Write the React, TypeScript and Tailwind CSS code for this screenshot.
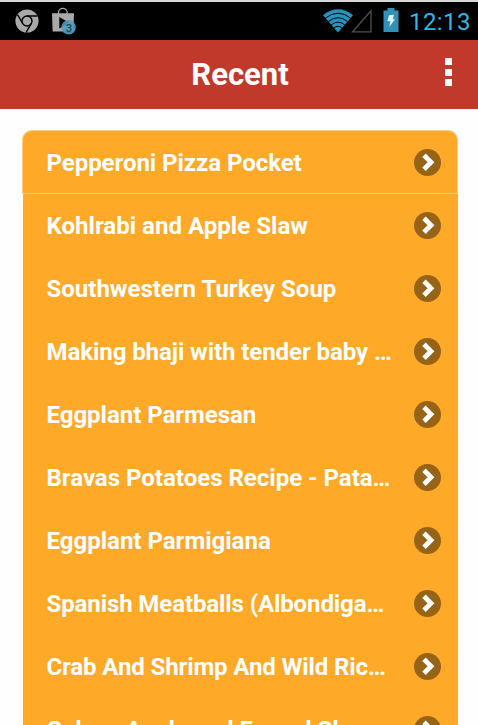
import React from "react";

const recipes = [
  { name: "Pepperoni Pizza Pocket", spacing: "tracking-[-0.04px]" },
  { name: "Kohlrabi and Apple Slaw", spacing: "tracking-[0.03px]" },
  { name: "Southwestern Turkey Soup", spacing: "tracking-normal" },
  { name: "Making bhaji with tender baby …", spacing: "tracking-[-0.07px]" },
  { name: "Eggplant Parmesan", spacing: "tracking-[-0.03px]" },
  { name: "Bravas Potatoes Recipe - Pata…", spacing: "tracking-normal" },
  { name: "Eggplant Parmigiana", spacing: "tracking-normal" },
  { name: "Spanish Meatballs (Albondiga…", spacing: "tracking-[-0.1px]" },
  { name: "Crab And Shrimp And Wild Ric…", spacing: "tracking-[-0.12px]" },
  { name: "Celery, Apple and Fennel Sla…", spacing: "tracking-normal" },
];

function ChromeIcon() {
  return (
    <svg width="24" height="24" viewBox="0 0 24 24" className="block">
      <circle cx="12" cy="12" r="11.6" fill="#a9a9a9" />
      <circle cx="12" cy="12" r="5" fill="none" stroke="#000" strokeWidth="1.4" />
      <path d="M12 7H22.4M7.7 14.5L2.5 5.6M16.3 14.5L11.1 23.4" stroke="#000" strokeWidth="1.4" />
    </svg>
  );
}

function PlayStoreIcon() {
  return (
    <svg width="26" height="30" viewBox="0 0 26 30" className="block">
      <path d="M6.4 8V5.8a4.4 4.4 0 0 1 8.8 0V8" fill="none" stroke="#a9a9a9" strokeWidth="1.3" />
      <path d="M0 6.2H22L21.4 24.5H.6Z" fill="#a9a9a9" />
      <path d="M7.3 10V21.5L17 15.8Z" fill="#000" />
      <circle cx="16.6" cy="20.3" r="7.2" fill="#4d9ebf" fillOpacity=".9" />
      <text x="17" y="24.6" textAnchor="middle" fontSize="11.5" fontFamily="Roboto, sans-serif" fontWeight="500" fill="#244854">3</text>
    </svg>
  );
}

function WifiIcon() {
  return (
    <svg width="30" height="24" viewBox="0 0 30 24" className="block">
      <path d="M0 6.2Q15-5.5 30 6.2L15 23.5Z" fill="#2793bd" />
      <path d="M2.2 9.2Q15-.8 27.8 9.2M5.3 12.6Q15 4.8 24.7 12.6M8.2 16Q15 10.2 21.8 16M10.8 19Q15 15.6 19.2 19" fill="none" stroke="#000" strokeWidth="1" />
    </svg>
  );
}

function SignalIcon() {
  return (
    <svg width="22" height="24" viewBox="0 0 22 24" className="block">
      <path d="M1.6 22.8L20 1.7V22.8Z" fill="none" stroke="#505050" strokeWidth="1.3" />
    </svg>
  );
}

function BatteryIcon() {
  return (
    <svg width="16" height="24" viewBox="0 0 16 24" className="block">
      <path d="M4.5 0H11.5V2.5H15.5V24H.5V2.5H4.5Z" fill="#3391b7" />
      <path d="M6 7.2L11 6.7 9.8 11.2H12L6.2 19 7.4 13.3H4.4Z" fill="#e0f0f5" />
    </svg>
  );
}

function ArrowBadge() {
  return (
    <svg width="27" height="27" viewBox="0 0 27 27" className="block shrink-0">
      <circle cx="13.5" cy="13.5" r="13.5" fill="#976316" />
      <path d="M10 6.2L17 13.2 10 20.2" fill="none" stroke="#fff" strokeWidth="4.8" />
    </svg>
  );
}

export default function App() {
  return (
    <div className="flex h-[725px] w-[478px] flex-col overflow-hidden bg-[#fefefe] font-[Roboto,sans-serif]">
      <div className="flex h-10 shrink-0 items-start border-t-2 border-[#d5d7d8] bg-black pt-[7px]">
        <div className="ml-[15px]"><ChromeIcon /></div>
        <div className="-mt-0.5 ml-[13px]"><PlayStoreIcon /></div>
        <div className="ml-auto"><WifiIcon /></div>
        <div className="-ml-0.5"><SignalIcon /></div>
        <div className="-mt-px ml-2.5"><BatteryIcon /></div>
        <span className="mr-[7px] ml-[10px] w-[62px] text-[24px] leading-[26px] tracking-[0.4px] whitespace-nowrap text-[#33b5e5]">12:13</span>
      </div>

      <header className="grid h-[69px] shrink-0 grid-cols-[60px_1fr_60px] items-center bg-[#c1392b]">
        <h1 className="col-start-2 pt-px pl-0.5 text-center text-[31px] leading-9 font-bold text-white">Recent</h1>
        <div className="mb-[5px] ml-[27px] flex flex-col gap-[3.5px]">
          <span className="size-[7px] bg-white" />
          <span className="size-[7px] bg-white" />
          <span className="size-[7px] bg-white" />
        </div>
      </header>

      <ul className="mx-[22px] mt-[21px] text-[24px] font-bold text-white">
        {recipes.map(({ name, spacing }, i) => (
          <li
            key={name}
            className={
              i === 0
                ? "flex h-16 w-[436px] items-center rounded-t-[10px] border border-[#ffcc80] bg-[#fea928] pr-4 pl-[23.5px]"
                : "ml-px flex h-[63px] w-[435px] items-center bg-[#fea928] pr-[17px] pl-[23.5px]"
            }
          >
            <span className={`${i === 0 ? "pt-0.5" : ""} ${spacing} leading-8 whitespace-nowrap`}>{name}</span>
            <span className="ml-auto"><ArrowBadge /></span>
          </li>
        ))}
      </ul>
    </div>
  );
}
